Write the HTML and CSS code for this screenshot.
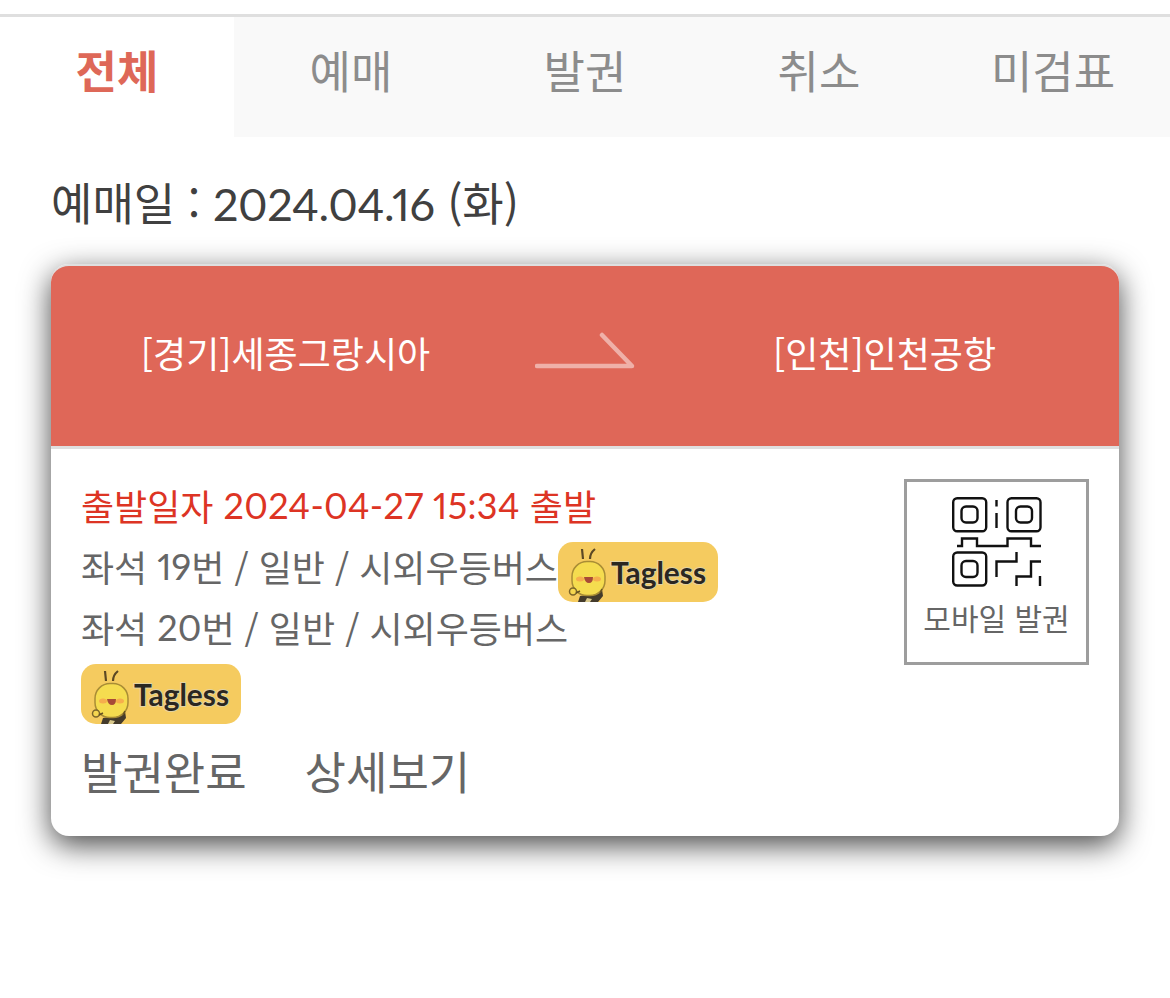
FILE: index.html
```html
<!DOCTYPE html>
<html lang="ko">
<head>
  <meta charset="UTF-8" />
  <meta name="viewport" content="width=device-width, initial-scale=1" />
  <title>예매 내역</title>
  <link rel="stylesheet" href="styles.css">
</head>
<body>
  <!-- shared icons -->
  <svg class="defs" width="0" height="0">
    <symbol id="chick" viewBox="0 0 50 60">
      <path d="M25 17L24 7M32 17Q32 11 37 7" fill="none" stroke="#5c4824" stroke-width="2.2"/>
      <path d="M20 60L22 54L29 53L42 51L44 47L45 54L40 60Z" fill="#443b2b"/>
      <path d="M27 60L29 56L34 57L32 60Z" fill="#d9c98c"/>
      <rect x="14" y="19.500" width="33" height="34" rx="15" fill="#f5dc4f" stroke="#a98d35" stroke-width="1.500"/>
      <ellipse cx="22" cy="37" rx="4" ry="2.500" fill="#f6ae4d"/>
      <ellipse cx="39" cy="37" rx="4" ry="2.500" fill="#f6ae4d"/>
      <path d="M26 35H35Q35 41 31 41Q27 41 26 35Z" fill="#a84a37"/>
      <circle cx="15" cy="49.500" r="3.500" fill="#f5d650" stroke="#7d6629" stroke-width="1.500"/>
      <path d="M18 51L22 49M42 51L44 47" fill="none" stroke="#665323" stroke-width="1.500"/>
    </symbol>
  </svg>

  <nav class="tabs">
    <a class="tab active">전체</a>
    <a class="tab">예매</a>
    <a class="tab">발권</a>
    <a class="tab">취소</a>
    <a class="tab">미검표</a>
  </nav>

  <main class="container">
    <h2 class="buy-date">예매일 : <span class="num">2024.04.16</span> (화)</h2>

    <div class="ticket">
      <div class="route">
        <span class="place">[경기]세종그랑시아</span>
        <svg class="arrow" width="100" height="38" viewBox="0 0 100 38">
          <path d="M2 34H97L67 3" fill="none" stroke="#efb0a8" stroke-width="4.500" stroke-linecap="round" stroke-linejoin="round"/>
        </svg>
        <span class="place">[인천]인천공항</span>
      </div>

      <div class="ticket-body">
        <div class="info">
          <p class="depart">출발일자 <span class="num">2024-04-27 15:34</span> 출발</p>
          <p class="seat">좌석 <span class="num">19</span>번 / 일반 / 시외우등버스<svg class="badge" viewBox="0 0 160 60"><use href="#chick" width="50" height="60"/><text x="53" y="42" textLength="95" lengthAdjust="spacingAndGlyphs">Tagless</text></svg></p>
          <p class="seat">좌석 <span class="num">20</span>번 / 일반 / 시외우등버스</p>
          <p class="seat"><svg class="badge" viewBox="0 0 160 60"><use href="#chick" width="50" height="60"/><text x="53" y="42" textLength="95" lengthAdjust="spacingAndGlyphs">Tagless</text></svg></p>
          <div class="links">
            <a>발권완료</a>
            <a>상세보기</a>
          </div>
        </div>

        <div class="mobile-ticket">
          <svg width="90" height="90" viewBox="0 0 90 90" fill="none" stroke="#111" stroke-width="2.400">
            <rect x="1.200" y="1.200" width="33" height="33" rx="4"/>
            <rect x="9.500" y="9.500" width="16" height="16" rx="4.500"/>
            <rect x="55.500" y="1.200" width="33" height="33" rx="4"/>
            <rect x="64" y="9.500" width="16" height="16" rx="4.500"/>
            <rect x="1.200" y="55.500" width="33" height="33" rx="4"/>
            <rect x="9.500" y="64" width="16" height="16" rx="4.500"/>
            <path d="M44.500 3V9.500M44.500 16V31"/>
            <path d="M5 49H10V41.500H25V49H55.500V41.500H79V49H89"/>
            <path d="M44.500 80V64.500H64.500V55M89 64.500H79V79.500H64.500V89M88 79V89"/>
          </svg>
          <span>모바일 발권</span>
        </div>
      </div>
    </div>
  </main>
</body>
</html>
```

FILE: styles.css
```css
* {
  box-sizing: border-box;
}
body {
  margin: 0;
  min-height: 100vh;
  padding-top: 14px;
  font-family: "Noto Sans CJK KR", sans-serif;
  font-weight: 400;
  background: #fff;
  color: #404040;
}
.defs {
  position: absolute;
}
.tabs {
  display: flex;
  height: 123px;
  border-top: 3px solid #dfdfdf;
}
.tab {
  flex: 1;
  background: #f9f9f9;
  color: #8c8c8c;
  font-size: 45px;
  line-height: 106px;
  text-align: center;
}
.tab.active {
  background: #fff;
  color: #de6858;
  font-weight: 700;
}
.container {
  padding: 0 51px;
}
.num {
  font-family: Lato, sans-serif;
  font-variant-numeric: proportional-nums;
}
.buy-date {
  margin: 0;
  height: 127px;
  font-size: 45px;
  font-weight: 400;
  line-height: 129px;
}
.buy-date .num {
  letter-spacing: -0.4px;
}
.ticket {
  height: 572px;
  border-radius: 18px;
  background: #fff;
  box-shadow: 0 9px 30px rgba(0, 0, 0, 0.72);
}
.route {
  display: grid;
  grid-template-columns: 469px 130px 469px;
  align-items: center;
  justify-items: center;
  height: 185px;
  border-top: 2px solid #dfdfdf;
  border-bottom: 3px solid #dfdfdf;
  border-radius: 18px 18px 0 0;
  background: #df6758;
  color: #fff;
  font-size: 36px;
}
.place {
  line-height: 54px;
  margin-bottom: 8px;
}
.arrow {
  margin-bottom: 10px;
}
.ticket-body {
  display: flex;
  justify-content: space-between;
  align-items: flex-start;
  padding: 30px;
}
.info p {
  display: flex;
  align-items: flex-start;
  margin: 0;
  height: 61px;
  font-size: 36px;
  line-height: 54px;
  color: #666;
  white-space: pre;
}
.info .depart {
  height: 60px;
  line-height: 52px;
  color: #dd3424;
}
.depart .num {
  letter-spacing: 0.3px;
}
.badge {
  width: 160px;
  height: 60px;
  margin-top: 3px;
  border-radius: 15px;
  background: #f5cb5f;
}
.badge text {
  font-family: Lato, sans-serif;
  font-size: 31px;
  font-weight: 700;
  fill: #2a2721;
  stroke: #e3d3a2;
  stroke-width: 2px;
  paint-order: stroke;
}
.links {
  display: flex;
  gap: 58px;
  margin-top: 15px;
  font-size: 45px;
  line-height: 68px;
  color: #666;
}
.mobile-ticket {
  display: flex;
  flex-direction: column;
  align-items: center;
  width: 185px;
  height: 186px;
  padding-top: 15px;
  border: 3px solid #9d9d9d;
  font-size: 30px;
  line-height: 61px;
  color: #666;
}
```
